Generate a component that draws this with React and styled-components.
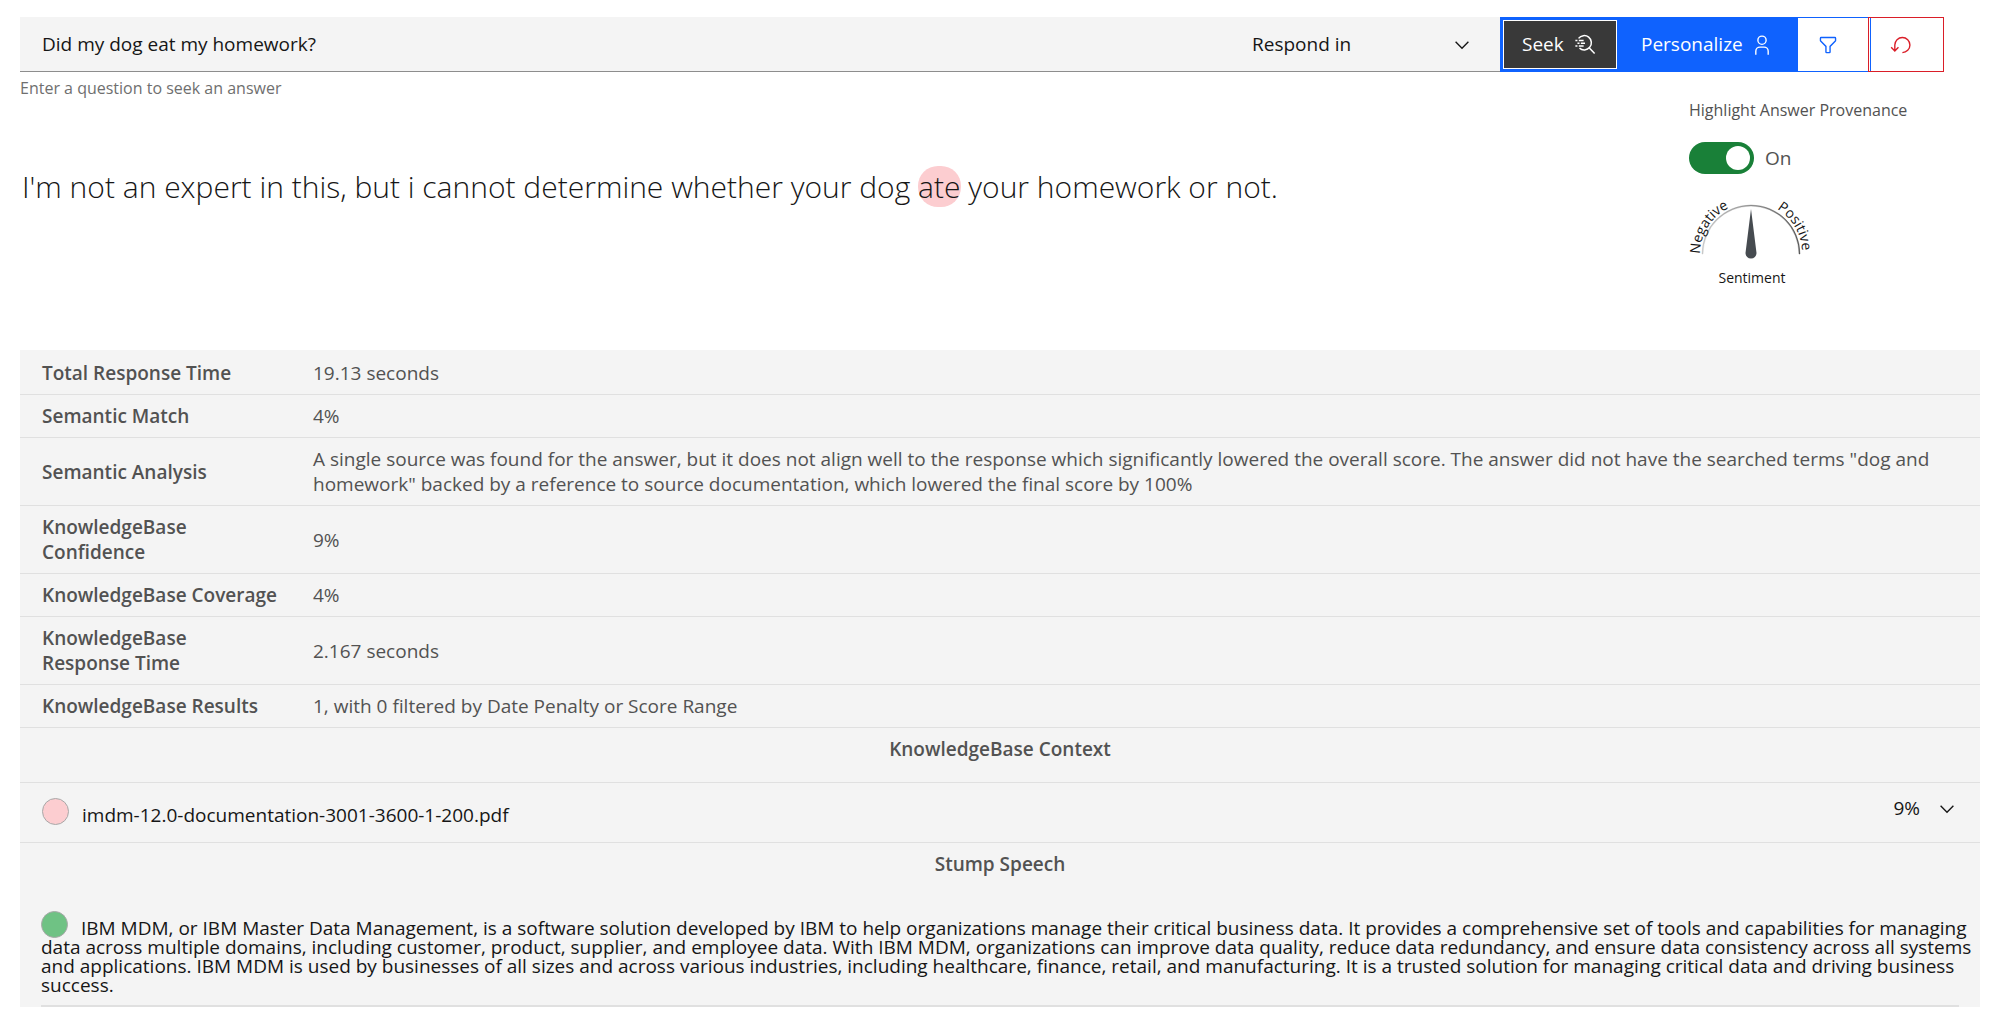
import React, { useState } from "react";
import styled, { createGlobalStyle } from "styled-components";

const color = {
  text: "#161616",
  secondary: "#525252",
  helper: "#6f6f6f",
  layer: "#f4f4f4",
  border: "#e0e0e0",
  strong: "#8d8d8d",
  blue: "#0f62fe",
  red: "#da1e28",
  green: "#198038",
  pinkMark: "#fccdd0",
  greenMark: "#6fc284",
};

const GlobalStyle = createGlobalStyle`
  *, *::before, *::after { box-sizing: border-box; }
  body {
    margin: 0;
    background: #fff;
    color: ${color.text};
    font-family: "Open Sans", "Noto Sans", sans-serif;
    font-size: 19px;
    line-height: 25px;
  }
  button, input, select { font: inherit; color: inherit; border-radius: 0; margin: 0; }
  p, h1, h2 { margin: 0; }
`;

const Page = styled.main`
  padding: 17px 20px 18px;
`;

const Toolbar = styled.form`
  display: flex;
  height: 55px;
  margin-right: 36px;
`;

const QuestionInput = styled.input`
  flex: 1;
  min-width: 0;
  padding: 0 22px;
  border: 0;
  border-bottom: 1px solid ${color.strong};
  background: ${color.layer};
  outline: none;
`;

const SelectWrap = styled.div`
  display: grid;
  flex: 0 0 270px;
  align-items: center;
  background: ${color.layer};

  > * { grid-area: 1 / 1; }
  > svg { justify-self: end; margin-right: 27px; pointer-events: none; }
`;

const LanguageSelect = styled.select`
  width: 100%;
  height: 100%;
  padding: 0 60px 0 22px;
  border: 0;
  border-bottom: 1px solid ${color.strong};
  background: transparent;
  appearance: none;
`;

const ActionButton = styled.button`
  display: flex;
  flex: none;
  align-items: center;
  justify-content: space-between;
  width: 177px;
  padding: 0 24px 0 21px;
  border: 0;
  background: ${color.blue};
  color: #fff;
`;

const SeekButton = styled(ActionButton)`
  width: 120px;
  padding: 0 21px 0 19px;
  border: 3px solid ${color.blue};
  background: #393939;
  box-shadow: inset 0 0 0 1px #fff;
`;

const IconButton = styled.button`
  display: flex;
  flex: none;
  align-items: center;
  width: 74px;
  padding: 0 19px;
  border: 1px solid ${color.blue};
  background: transparent;
  color: ${color.blue};
`;

const ResetButton = styled(IconButton)`
  width: 76px;
  margin-left: -3px;
  padding: 0 21px;
  border-color: ${color.red};
  color: ${color.red};
`;

const HelperText = styled.p`
  margin-top: 6px;
  color: ${color.helper};
  font-size: 16px;
  line-height: 20px;
`;

const ResultArea = styled.section`
  display: flex;
  min-height: 252px;
`;

const Answer = styled.p`
  flex: 1;
  padding: 69px 2px 0;
  font-size: 30px;
  font-weight: 300;
  line-height: 39px;
`;

const Highlight = styled.mark`
  border-radius: 20px;
  background: ${color.pinkMark};
  color: inherit;
`;

const SidePanel = styled.aside`
  flex: 0 0 291px;
`;

const ToggleTitle = styled.p`
  margin-bottom: 20px;
  color: ${color.secondary};
  font-size: 16px;
  line-height: 24px;
`;

const ToggleLabel = styled.label`
  display: flex;
  align-items: center;
  gap: 11px;
  margin-bottom: 20px;
  color: ${color.secondary};
`;

const Switch = styled.input`
  display: flex;
  align-items: center;
  width: 65px;
  height: 32px;
  padding: 0 4px;
  border-radius: 16px;
  background: ${color.strong};
  appearance: none;

  &::before {
    width: 24px;
    height: 24px;
    border-radius: 50%;
    background: #fff;
    content: "";
  }

  &:checked {
    justify-content: flex-end;
    background: ${color.green};
  }
`;

const Gauge = styled.svg`
  display: block;
  overflow: visible;
  font-size: 14px;
`;

const Details = styled.section`
  padding-top: 2px;
  background: ${color.layer};
`;

const MetricsTable = styled.table`
  width: 100%;
  border-collapse: separate;
  border-spacing: 0;
  table-layout: fixed;
  color: ${color.secondary};
  text-align: left;
`;

const MetricName = styled.th`
  width: 271px;
  padding: 9px 10px 8px 22px;
  border-bottom: 1px solid ${color.border};
  font-weight: 600;
`;

const MetricValue = styled.td`
  padding: 9px 22px 8px;
  border-bottom: 1px solid ${color.border};
`;

const SectionTitle = styled.h2`
  padding: 9px 22px 20px;
  border-bottom: 1px solid ${(p) => (p.$divided ? color.border : "transparent")};
  color: ${color.secondary};
  font-size: 19px;
  font-weight: 600;
  line-height: 25px;
  text-align: center;
`;

const SourceRow = styled.button`
  display: flex;
  align-items: flex-start;
  width: 100%;
  height: 60px;
  padding: 15px 22px;
  border: 0;
  border-bottom: 1px solid ${color.border};
  background: transparent;
  line-height: 20px;
  text-align: left;
`;

const SourceName = styled.span`
  flex: 1;
`;

const Score = styled.span`
  margin-right: 16px;
`;

const Dot = styled.span`
  display: inline-block;
  width: 27px;
  height: 27px;
  margin-right: 13px;
  border: 1px solid #a8a8a8;
  border-radius: 50%;
  background: ${(p) => (p.$found ? color.greenMark : color.pinkMark)};
  vertical-align: -3px;
`;

const Speech = styled.p`
  padding: 13px 0 0 21px;
  line-height: 19px;
`;

const SpeechEnd = styled.hr`
  height: 2px;
  margin: 10px 21px 0;
  border: 0;
  background: ${color.border};
`;

const Icon = ({ children, size = 22, box = 32 }) => (
  <svg width={size} height={size} viewBox={`0 0 ${box} ${box}`} fill="currentColor" aria-hidden="true">
    {children}
  </svg>
);

const ChevronIcon = () => (
  <Icon box={16}>
    <path d="M8 11 3 6l.7-.7L8 9.6l4.3-4.3.7.7z" />
  </Icon>
);

const SeekIcon = () => (
  <Icon>
    <g fill="none" stroke="currentColor" strokeWidth="2.2">
      <path d="M6.6 6.4A10.4 10.4 0 1 1 8 20.6" />
      <path d="m22 20 8 8.5" />
      <path d="M2 9.5h3M7 9.5h7M5 13.5h3M10 13.5h6M2 17.5h3M7 17.5h7" />
    </g>
  </Icon>
);

const UserIcon = () => (
  <Icon>
    <path d="M16 4a5 5 0 1 1-5 5 5 5 0 0 1 5-5m0-2a7 7 0 1 0 7 7 7 7 0 0 0-7-7zM26 30h-2v-5a5 5 0 0 0-5-5h-6a5 5 0 0 0-5 5v5H6v-5a7 7 0 0 1 7-7h6a7 7 0 0 1 7 7z" />
  </Icon>
);

const FilterIcon = () => (
  <Icon>
    <path d="M18 28h-4a2 2 0 0 1-2-2v-7.59L4.59 11A2 2 0 0 1 4 9.59V6a2 2 0 0 1 2-2h20a2 2 0 0 1 2 2v3.59a2 2 0 0 1-.59 1.41L20 18.41V26a2 2 0 0 1-2 2zM6 6v3.59l8 8V26h4v-8.41l8-8V6z" />
  </Icon>
);

const ResetIcon = () => (
  <Icon>
    <path d="M18 28A12 12 0 1 0 6 16v6.2l-3.6-3.6L1 20l6 6 6-6-1.4-1.4L8 22.2V16a10 10 0 1 1 10 10z" />
  </Icon>
);

const SentimentGauge = () => (
  <Gauge width="126" height="95" viewBox="0 0 126 95" role="img" aria-label="Sentiment gauge">
    <defs>
      <linearGradient id="scale">
        <stop offset="0" stopColor="#c6c6c6" />
        <stop offset="1" stopColor="#525252" />
      </linearGradient>
      <path id="negative-arc" d="M11 60A51 51 0 0 1 62 9" />
      <path id="positive-arc" d="M88 15A51 51 0 0 1 113 59V80" />
    </defs>
    <path
      d="M13 60A49 49 0 0 1 111 60L110 60A48 48 0 0 0 14 60z"
      fill="url(#scale)"
      stroke="url(#scale)"
      strokeWidth=".4"
    />
    <path d="M62 15 56.5 59a5.5 5.5 0 0 0 11 0z" fill="#464b50" />
    <text fill={color.text}>
      <textPath href="#negative-arc">Negative</textPath>
    </text>
    <text fill={color.text}>
      <textPath href="#positive-arc">Positive</textPath>
    </text>
    <text x="63" y="89" textAnchor="middle" fill={color.text}>
      Sentiment
    </text>
  </Gauge>
);

const metrics = [
  ["Total Response Time", "19.13 seconds"],
  ["Semantic Match", "4%"],
  [
    "Semantic Analysis",
    'A single source was found for the answer, but it does not align well to the response which significantly lowered the overall score. The answer did not have the searched terms "dog and homework" backed by a reference to source documentation, which lowered the final score by 100%',
  ],
  ["KnowledgeBase Confidence", "9%"],
  ["KnowledgeBase Coverage", "4%"],
  ["KnowledgeBase Response\u00a0Time", "2.167 seconds"],
  ["KnowledgeBase Results", "1, with 0 filtered by Date Penalty or Score Range"],
];

export default function App() {
  const [question, setQuestion] = useState("Did my dog eat my homework?");
  const [provenance, setProvenance] = useState(true);

  return (
    <Page>
      <GlobalStyle />
      <Toolbar onSubmit={(e) => e.preventDefault()}>
        <QuestionInput
          type="text"
          aria-label="Question"
          aria-describedby="question-help"
          value={question}
          onChange={(e) => setQuestion(e.target.value)}
        />
        <SelectWrap>
          <LanguageSelect aria-label="Respond in">
            <option>Respond in</option>
          </LanguageSelect>
          <ChevronIcon />
        </SelectWrap>
        <SeekButton type="submit">
          Seek
          <SeekIcon />
        </SeekButton>
        <ActionButton type="button">
          Personalize
          <UserIcon />
        </ActionButton>
        <IconButton type="button" aria-label="Filter">
          <FilterIcon />
        </IconButton>
        <ResetButton type="button" aria-label="Reset">
          <ResetIcon />
        </ResetButton>
      </Toolbar>
      <HelperText id="question-help">Enter a question to seek an answer</HelperText>

      <ResultArea>
        <Answer>
          I'm not an expert in this, but i cannot determine whether your dog <Highlight>ate</Highlight> your
          homework or not.
        </Answer>
        <SidePanel>
          <ToggleTitle id="provenance-title">Highlight Answer Provenance</ToggleTitle>
          <ToggleLabel>
            <Switch
              type="checkbox"
              role="switch"
              aria-labelledby="provenance-title"
              checked={provenance}
              onChange={(e) => setProvenance(e.target.checked)}
            />
            {provenance ? "On" : "Off"}
          </ToggleLabel>
          <SentimentGauge />
        </SidePanel>
      </ResultArea>

      <Details>
        <MetricsTable>
          <tbody>
            {metrics.map(([name, value]) => (
              <tr key={name}>
                <MetricName scope="row">{name}</MetricName>
                <MetricValue>{value}</MetricValue>
              </tr>
            ))}
          </tbody>
        </MetricsTable>
        <SectionTitle $divided>KnowledgeBase Context</SectionTitle>
        <SourceRow type="button" aria-expanded="false">
          <SourceName>
            <Dot />
            imdm-12.0-documentation-3001-3600-1-200.pdf
          </SourceName>
          <Score>9%</Score>
          <ChevronIcon />
        </SourceRow>
        <SectionTitle>Stump Speech</SectionTitle>
        <Speech>
          <Dot $found />
          IBM MDM, or IBM Master Data Management, is a software solution developed by IBM to help organizations
          manage their critical business data. It provides a comprehensive set of tools and capabilities for
          managing data across multiple domains, including customer, product, supplier, and employee data. With
          IBM MDM, organizations can improve data quality, reduce data redundancy, and ensure data consistency
          across all systems and applications. IBM MDM is used by businesses of all sizes and across various
          industries, including healthcare, finance, retail, and manufacturing. It is a trusted solution for
          managing critical data and driving business success.
        </Speech>
        <SpeechEnd />
      </Details>
    </Page>
  );
}
